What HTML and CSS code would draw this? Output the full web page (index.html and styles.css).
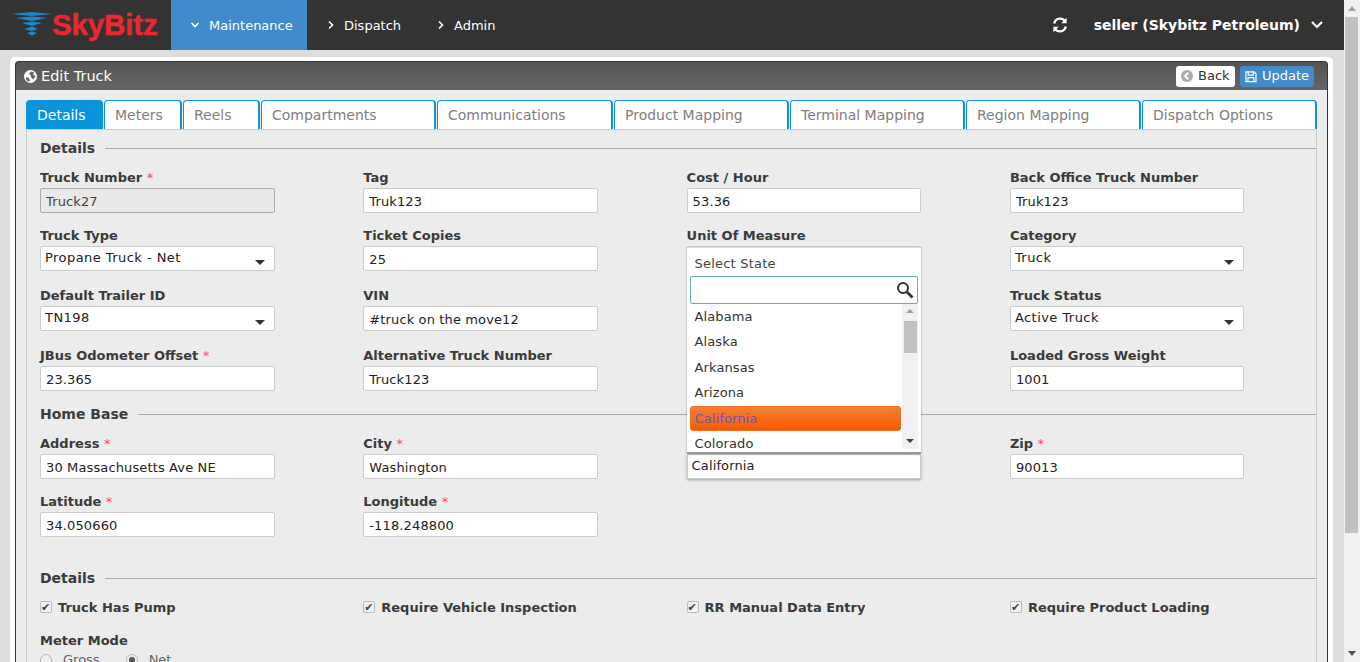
FILE: index.html
```html
<!DOCTYPE html>
<html lang="en">
<head>
<meta charset="utf-8">
<title>Edit Truck</title>
<link rel="stylesheet" href="styles.css">
</head>
<body>
<div class="page">
  <header class="topbar">
    <div class="logo">
      <svg class="logo-mark" width="42" height="24" viewBox="0 0 42 24"><path d="M0 2 L21 0 L41 2 L21 4Z" fill="#1b87c9"/><path d="M5 6 L21 4.5 L36 6 L21 9Z" fill="#1b87c9"/><path d="M11 11 L21 9.5 L31 11 L21 14Z" fill="#1b87c9"/><path d="M13 17 L21 14.5 L27 17 L21 19Z" fill="#1b87c9"/><path d="M16 21 L21 19.5 L26 21 L21 23.5Z" fill="#1b87c9"/></svg>
      <span class="logo-text">SkyBitz</span>
    </div>
    <nav class="mainnav">
      <a class="navitem active"><svg class="chev" width="10" height="10" viewBox="0 0 10 10"><path d="M1.5 3 L5 6.5 L8.5 3" fill="none" stroke="#fff" stroke-width="1.6"/></svg>Maintenance</a>
      <a class="navitem"><svg class="chev" width="10" height="10" viewBox="0 0 10 10"><path d="M3 1.5 L6.5 5 L3 8.5" fill="none" stroke="#fff" stroke-width="1.6"/></svg>Dispatch</a>
      <a class="navitem"><svg class="chev" width="10" height="10" viewBox="0 0 10 10"><path d="M3 1.5 L6.5 5 L3 8.5" fill="none" stroke="#fff" stroke-width="1.6"/></svg>Admin</a>
    </nav>
    <div class="userbox">
      <svg class="refresh" width="16" height="16" viewBox="0 0 16 16"><path d="M2.2 6.5 A6 6 0 0 1 12.6 3.6" fill="none" stroke="#fff" stroke-width="2.2"/><path d="M14.6 0.8 V6.2 H9.2Z" fill="#fff"/><path d="M13.8 9.5 A6 6 0 0 1 3.4 12.4" fill="none" stroke="#fff" stroke-width="2.2"/><path d="M1.4 15.2 V9.8 H6.8Z" fill="#fff"/></svg>
      <span class="username">seller (Skybitz Petroleum)</span>
      <svg width="12" height="10" viewBox="0 0 12 10"><path d="M1 2 L6 7 L11 2" fill="none" stroke="#fff" stroke-width="2.2"/></svg>
    </div>
  </header>

  <main class="content">
    <section class="panel">
      <div class="panel-head">
        <h1 class="panel-title"><svg width="13" height="13" viewBox="0 0 13 13"><circle cx="6.5" cy="6.5" r="6.5" fill="#fff"/><path d="M7 1.5 L10 2.5 L9 4.5 L11.5 6 L9.5 9.5 L7.5 8 L6.5 5 L5 3.5Z M2 7 L5 8 L6 11 L4 11.5 L2 9.5Z" fill="#666"/></svg>Edit Truck</h1>
        <div class="panel-actions">
          <button class="btn btn-back"><svg width="12" height="12" viewBox="0 0 12 12"><circle cx="6" cy="6" r="6" fill="#aaa"/><path d="M7.2 2.8 L4 6 L7.2 9.2" fill="none" stroke="#fff" stroke-width="2"/></svg><span class="btn-label">Back</span></button>
          <button class="btn btn-update"><svg width="13" height="13" viewBox="0 0 13 13"><path d="M1 1.5 H10 L12 3.5 V12 H1Z M3.5 1.5 V5 H9 V1.5 M3.2 12 V7.8 H9.8 V12" fill="none" stroke="#fff" stroke-width="1.3"/></svg><span class="btn-label">Update</span></button>
        </div>
      </div>
      <div class="panel-body">
        <div class="tabs">
          <a class="tab tab-active t1">Details</a>
          <a class="tab t2">Meters</a>
          <a class="tab t1">Reels</a>
          <a class="tab t4">Compartments</a>
          <a class="tab t5">Communications</a>
          <a class="tab t4">Product Mapping</a>
          <a class="tab t4">Terminal Mapping</a>
          <a class="tab t4">Region Mapping</a>
          <a class="tab t4">Dispatch Options</a>
        </div>
        <div class="tabpane">
          <div class="legend"><span>Details</span></div>
          <div class="row">
            <div class="field"><label>Truck Number <i>*</i></label><div class="input disabled">Truck27</div></div>
            <div class="field"><label>Tag</label><div class="input">Truk123</div></div>
            <div class="field"><label>Cost / Hour</label><div class="input">53.36</div></div>
            <div class="field"><label>Back Office Truck Number</label><div class="input">Truk123</div></div>
          </div>
          <div class="row tall">
            <div class="field"><label>Truck Type</label><div class="input select">Propane Truck - Net<b></b></div></div>
            <div class="field"><label>Ticket Copies</label><div class="input">25</div></div>
            <div class="field"><label>Unit Of Measure</label><div class="input select"></div></div>
            <div class="field"><label>Category</label><div class="input select">Truck<b></b></div></div>
          </div>
          <div class="row tall">
            <div class="field"><label>Default Trailer ID</label><div class="input select">TN198<b></b></div></div>
            <div class="field"><label>VIN</label><div class="input">#truck on the move12</div></div>
            <div class="field"></div>
            <div class="field"><label>Truck Status</label><div class="input select">Active Truck<b></b></div></div>
          </div>
          <div class="row before-legend">
            <div class="field"><label>JBus Odometer Offset <i>*</i></label><div class="input">23.365</div></div>
            <div class="field"><label>Alternative Truck Number</label><div class="input">Truck123</div></div>
            <div class="field"></div>
            <div class="field"><label>Loaded Gross Weight</label><div class="input">1001</div></div>
          </div>
          <div class="legend"><span>Home Base</span></div>
          <div class="row">
            <div class="field"><label>Address <i>*</i></label><div class="input">30 Massachusetts Ave NE</div></div>
            <div class="field"><label>City <i>*</i></label><div class="input">Washington</div></div>
            <div class="field state-field">
              <div class="input state-input">California</div>
              <div class="dropdown">
                <div class="dd-title">Select State</div>
                <div class="dd-search"><svg width="18" height="18" viewBox="0 0 18 18"><circle cx="7" cy="7" r="5" fill="none" stroke="#333" stroke-width="2"/><path d="M10.8 10.8 L16.5 16.5" stroke="#333" stroke-width="2.8"/></svg></div>
                <div class="dd-listwrap">
                  <ul class="dd-list">
                    <li>Alabama</li><li>Alaska</li><li>Arkansas</li><li>Arizona</li><li class="sel">California</li><li>Colorado</li>
                  </ul>
                  <div class="dd-scroll"><s class="up"></s><em></em><s class="down"></s></div>
                </div>
              </div>
            </div>
            <div class="field"><label>Zip <i>*</i></label><div class="input">90013</div></div>
          </div>
          <div class="row">
            <div class="field"><label>Latitude <i>*</i></label><div class="input">34.050660</div></div>
            <div class="field"><label>Longitude <i>*</i></label><div class="input">-118.248800</div></div>
          </div>
          <div class="legend second"><span>Details</span></div>
          <div class="row checks">
            <div class="check"><u></u>Truck Has Pump</div>
            <div class="check"><u></u>Require Vehicle Inspection</div>
            <div class="check"><u></u>RR Manual Data Entry</div>
            <div class="check"><u></u>Require Product Loading</div>
          </div>
          <div class="meter">
            <label>Meter Mode</label>
            <div class="radios"><span class="radio"><q></q>Gross</span><span class="radio on"><q></q>Net</span></div>
          </div>
        </div>
      </div>
    </section>
  </main>
</div>
<aside class="scrollbar"><s class="up"></s><em></em><s class="down"></s></aside>
</body>
</html>
```

FILE: styles.css
```css
* { box-sizing: border-box; }
html, body { margin: 0; height: 662px; overflow: hidden; }
body { display: flex; font-family: "DejaVu Sans", Verdana, sans-serif; font-size: 13px; color: #333; background: #ddd; }
.page { width: 1344px; flex: none; height: 662px; overflow: hidden; }
.scrollbar { width: 16px; flex: none; background: #f1f1f1; position: relative; padding: 17px 2px 0 1px; }
.scrollbar em { display: block; height: 516px; background: #c1c1c1; }
.scrollbar s { position: absolute; left: 4px; width: 0; border: 4px solid transparent; }
.scrollbar .up { top: 6px; border-top: 0; border-bottom: 5px solid #a3a3a3; }
.scrollbar .down { top: 651px; border-bottom: 0; border-top: 5px solid #505050; }

.topbar { height: 50px; background: #333; display: flex; align-items: stretch; color: #fff; }
.logo { width: 171px; display: flex; align-items: center; padding-left: 11px; position: relative; }
.logo-mark { flex: none; margin-top: -3px; }
.logo-text { font-family: "Liberation Sans", Arial, sans-serif; font-weight: 700; font-size: 29.5px; color: #e9282f; margin-left: -1px; letter-spacing: -.15px; -webkit-text-stroke: .5px #e9282f; line-height: 1; margin-top: -1px; }
.mainnav { display: flex; }
.navitem { display: flex; align-items: center; gap: 8px; font-size: 13px; color: #fff; padding-left: 19px; width: 110px; }
.navitem.active { background: #428bca; width: 136px; gap: 9px; }
.navitem:last-child { width: 100px; }
.userbox { margin-left: auto; display: flex; align-items: center; padding-right: 21px; }
.refresh { margin-right: 26px; }
.username { font-weight: 700; font-size: 14px; margin-right: 11px; }

.content { padding: 7px 11px 0 10px; }
.panel { background: #fff; border-radius: 5px 5px 0 0; padding: 4px 5px 0; height: 620px; }
.panel-head { height: 29px; background: linear-gradient(#545454, #666); border-radius: 4px 4px 0 0; border: 1px solid #333; border-bottom: 0; display: flex; align-items: center; justify-content: space-between; padding: 0 13px 0 8px; }
.panel-title { margin: 0; font-size: 14.5px; font-weight: 400; color: #fff; display: flex; align-items: center; gap: 4px; }
.panel-actions { display: flex; gap: 5px; }
.btn { height: 21px; border: 0; border-radius: 3px; font: 13px "DejaVu Sans", sans-serif; display: flex; align-items: center; gap: 5px; padding: 0 5px; }
.btn-label { margin-top: -2px; }
.btn-back { background: #fff; color: #333; width: 59px; }
.btn-update { background: #428bca; color: #fff; width: 74px; }
.panel-body { background: #ececec; border-left: 1px solid #333; border-right: 1px solid #333; padding: 10px 10px 0 10px; height: 600px; }
.tabs { display: flex; gap: 1px; height: 29px; }
.tab { flex: none; height: 29px; background: #fff; border: 2px solid #0b94dc; border-bottom: 0; border-radius: 4px 4px 0 0; border-width: 1px 2px 0 1px; color: #808080; font-size: 14px; padding: 6px 0 0 10px; }
.t1 { width: 77px; } .t2 { width: 78px; } .t4 { width: 175px; } .t5 { width: 176px; }
.tab-active { background: #0b94dc; color: #fff; }
.tabpane { border: 1px solid #ccc; border-bottom: 0; padding: 9px 0 0 13px; height: 560px; background: #ececec; }
.legend { display: flex; align-items: center; height: 18px; margin-bottom: 11px; font-weight: 700; font-size: 14px; color: #3c3c3c; gap: 10px; }
.legend::after { content: ""; flex: 1; height: 1px; background: #aaa; margin-top: 1px; }
.legend.second { margin-top: 32px; }
.row { display: grid; grid-template-columns: repeat(4, 323.3px); margin-bottom: 13px; }
.row.tall { margin-bottom: 15px; }
.row.before-legend { margin-bottom: 14px; }
.field { position: relative; min-height: 45px; }
label { display: block; font-weight: 700; font-size: 13px; line-height: 20px; color: #3a3a3a; height: 20px; }
label i { color: #f0506e; font-style: normal; font-weight: 400; }
.input { width: 234.6px; height: 25px; background: #fff; border: 1px solid #ccc; border-radius: 2px; font-size: 13px; line-height: 26px; padding: 0 5px; color: #222; letter-spacing: .13px; position: relative; }
.input.disabled { background: #e9e9e9; border-color: #aaa; color: #444; }
.select { line-height: 21px; padding-left: 4px; letter-spacing: .45px; }
.select b { position: absolute; right: 9px; top: 13px; border: 5px solid transparent; border-top: 5px solid #333; border-bottom: 0; width: 0; }

.state-field { align-self: stretch; }
.state-input { position: absolute; left: 0; top: 20px; width: 234px; line-height: 21px; padding-left: 4px; box-shadow: 0 1px 3px rgba(0,0,0,.35); }
.dropdown { position: absolute; left: 0; top: -186px; width: 234px; height: 206px; background: #fff; box-shadow: 0 0 2px rgba(0,0,0,.4); border-bottom: 2px solid #999; padding: 2px 3px 0 3px; z-index: 2; }
.dd-title { height: 26px; line-height: 28px; padding-left: 5px; font-size: 13px; letter-spacing: .2px; color: #444; }
.dd-search { height: 28px; border: 1px solid #5fa9e0; border-radius: 2px; display: flex; justify-content: flex-end; align-items: center; padding-right: 3px; }
.dd-listwrap { display: flex; }
.dd-list { list-style: none; margin: 0; padding: 0; flex: 1; height: 146px; overflow: hidden; }
.dd-list li { height: 25.4px; line-height: 25px; padding-left: 5px; font-size: 13px; letter-spacing: .1px; color: #333; }
.dd-list li.sel { height: 25px; background: linear-gradient(#f58035, #f75a00); color: #5c5bc0; border-radius: 3px; border: 1px solid #ee6a1c; padding-left: 4px; line-height: 23px; }
.dd-scroll { width: 16px; flex: none; margin-left: 1px; background: #f1f1f1; height: 145px; position: relative; padding: 17px 1px 0; }
.dd-scroll em { display: block; width: 13px; height: 32px; background: #c1c1c1; margin-left: 1px; }
.dd-scroll s { position: absolute; left: 4px; width: 0; border: 4px solid transparent; }
.dd-scroll .up { top: 5px; border-top: 0; border-bottom: 4px solid #a3a3a3; }
.dd-scroll .down { bottom: 6px; border-bottom: 0; border-top: 4px solid #444; }

.checks { margin-bottom: 15px; }
.check { display: flex; align-items: center; gap: 6px; font-weight: 700; font-size: 13px; color: #3a3a3a; height: 18px; }
.check u { width: 12px; height: 12px; flex: none; border: 1px solid #bbb; border-radius: 2px; background: #f2f2f2; position: relative; text-decoration: none; }
.check u::after { content: "\2714"; position: absolute; left: 0; top: -2px; font-size: 11px; line-height: 15px; color: #444; }
.meter label { margin-bottom: 2px; }
.radios { display: flex; gap: 26px; }
.radio { display: flex; align-items: center; gap: 11px; color: #666; font-size: 13px; line-height: 14px; }
.radio q { quotes: none; width: 12px; height: 12px; border: 1px solid #bbb; border-radius: 50%; background: #eee; display: block; position: relative; }
.radio.on q::after { content: ""; position: absolute; left: 2px; top: 2px; width: 6px; height: 6px; border-radius: 50%; background: #555; }
```
